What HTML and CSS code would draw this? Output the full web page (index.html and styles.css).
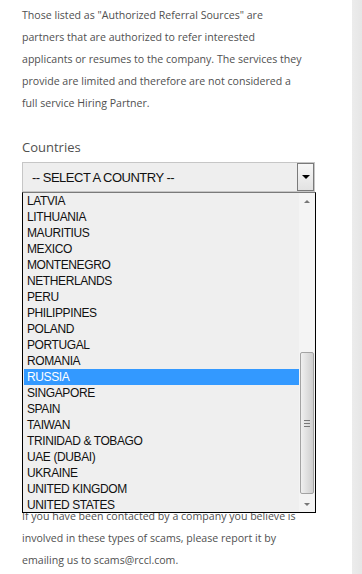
FILE: index.html
```html
<!DOCTYPE html>
<html lang="en">
  <head>
    <meta charset="utf-8" />
    <title>Hiring Partners - Countries</title>
    <link rel="stylesheet" href="styles.css">
  </head>
  <body>
    <div class="page">
      <main class="content">
        <p class="body-text">
          Those listed as "Authorized Referral Sources" are<br>
          partners that are authorized to refer interested<br>
          applicants or resumes to the company. The services they<br>
          provide are limited and therefore are not considered a<br>
          full service Hiring Partner.
        </p>

        <div class="field">
          <label class="field__label">Countries</label>
          <div class="select">
            <span class="select__value">-- SELECT A COUNTRY --</span>
            <span class="select__button"><span class="arrow arrow--down"></span></span>
          </div>

          <!-- open dropdown list, sits over the page -->
          <div class="dropdown">
            <ul class="dropdown__list">
              <li class="dropdown__item">LATVIA</li>
              <li class="dropdown__item">LITHUANIA</li>
              <li class="dropdown__item">MAURITIUS</li>
              <li class="dropdown__item">MEXICO</li>
              <li class="dropdown__item">MONTENEGRO</li>
              <li class="dropdown__item">NETHERLANDS</li>
              <li class="dropdown__item">PERU</li>
              <li class="dropdown__item">PHILIPPINES</li>
              <li class="dropdown__item">POLAND</li>
              <li class="dropdown__item">PORTUGAL</li>
              <li class="dropdown__item">ROMANIA</li>
              <li class="dropdown__item dropdown__item--active">RUSSIA</li>
              <li class="dropdown__item">SINGAPORE</li>
              <li class="dropdown__item">SPAIN</li>
              <li class="dropdown__item">TAIWAN</li>
              <li class="dropdown__item">TRINIDAD &amp; TOBAGO</li>
              <li class="dropdown__item">UAE (DUBAI)</li>
              <li class="dropdown__item">UKRAINE</li>
              <li class="dropdown__item">UNITED KINGDOM</li>
              <li class="dropdown__item">UNITED STATES</li>
            </ul>
            <div class="scrollbar">
              <span class="scrollbar__btn"><span class="arrow arrow--up arrow--small"></span></span>
              <div class="scrollbar__track">
                <div class="scrollbar__thumb">
                  <span class="grip"></span>
                </div>
              </div>
              <span class="scrollbar__btn"><span class="arrow arrow--down arrow--small"></span></span>
            </div>
          </div>
        </div>

        <p class="body-text body-text--after">
          If you have been contacted by a company you believe is<br>
          involved in these types of scams, please report it by<br>
          emailing us to scams@rccl.com.
        </p>
      </main>
      <aside class="rail"></aside>
    </div>
  </body>
</html>
```

FILE: styles.css
```css
body {
  margin: 0;
  background: #fff;
  font-family: "Open Sans", sans-serif;
  color: #505050;
}

.page {
  display: flex;
  min-height: 574px;
}

.content {
  flex: 1;
  padding: 4px 0 0 22px;
}

.rail {
  width: 10px;
  background: linear-gradient(to right, #ececec, #e6e6e6);
}

.body-text {
  margin: 0;
  white-space: nowrap;
  font-size: 10.6px;
  line-height: 22px;
}

.body-text--after {
  margin-top: 313px;
}

.field {
  position: relative;
  margin-top: 23px;
}

.field__label {
  display: block;
  font-size: 13px;
  line-height: 20px;
  margin-bottom: 5px;
}

.select {
  display: flex;
  align-items: center;
  justify-content: space-between;
  box-sizing: border-box;
  width: 293px;
  height: 30px;
  background: #eee;
  border: 1px solid #c6c6c6;
  font-family: "Liberation Sans", Arial, sans-serif;
  font-size: 13px;
  letter-spacing: -0.5px;
  color: #111;
}

.select__value {
  padding-left: 9px;
}

.select__button {
  display: flex;
  align-items: center;
  justify-content: center;
  box-sizing: border-box;
  width: 17px;
  height: 28px;
  border: 1px solid #7a7a7a;
  background: linear-gradient(to bottom, #f7f7f7, #e2e2e2);
}

.arrow {
  width: 0;
  height: 0;
  border-left: 4px solid transparent;
  border-right: 4px solid transparent;
}

.arrow--down {
  border-top: 4px solid #000;
}

.arrow--up {
  border-bottom: 4px solid #000;
}

.arrow--small.arrow--down {
  border-top-color: #777;
  border-left-width: 3px;
  border-right-width: 3px;
  border-top-width: 3px;
}

.arrow--small.arrow--up {
  border-bottom-color: #777;
  border-left-width: 3px;
  border-right-width: 3px;
  border-bottom-width: 3px;
}

.dropdown {
  position: absolute;
  top: 55px;
  left: 0;
  z-index: 5;
  display: flex;
  box-sizing: border-box;
  width: 294px;
  height: 321px;
  padding: 0 0 0 1px;
  background: #efefef;
  border: 1px solid #000;
  border-top-color: #7a7a7a;
}

.dropdown__list {
  flex: 1;
  margin: 0;
  padding: 0;
  list-style: none;
  font-family: "Liberation Sans", Arial, sans-serif;
  font-size: 12px;
  letter-spacing: -0.4px;
  color: #111;
}

.dropdown__item {
  height: 16px;
  line-height: 16px;
  padding-left: 3px;
}

.dropdown__item--active {
  background: #3399ff;
  color: #fff;
}

.scrollbar {
  display: flex;
  flex-direction: column;
  width: 16px;
  background: #f4f4f4;
}

.scrollbar__btn {
  display: flex;
  align-items: center;
  justify-content: center;
  height: 16px;
}

.scrollbar__track {
  flex: 1;
  display: flex;
  flex-direction: column;
  justify-content: flex-end;
  padding-bottom: 2px;
}

.scrollbar__thumb {
  display: flex;
  align-items: center;
  justify-content: center;
  box-sizing: border-box;
  height: 142px;
  margin: 0 1px;
  border: 1px solid #a3a3a3;
  border-radius: 2px;
  background: linear-gradient(to right, #f0f0f0, #dcdcdc 60%, #cfcfcf);
}

.grip {
  width: 6px;
  height: 5px;
  border-top: 1px solid #777;
  border-bottom: 1px solid #777;
  background: linear-gradient(#777, #777) center / 6px 1px no-repeat;
}
```
